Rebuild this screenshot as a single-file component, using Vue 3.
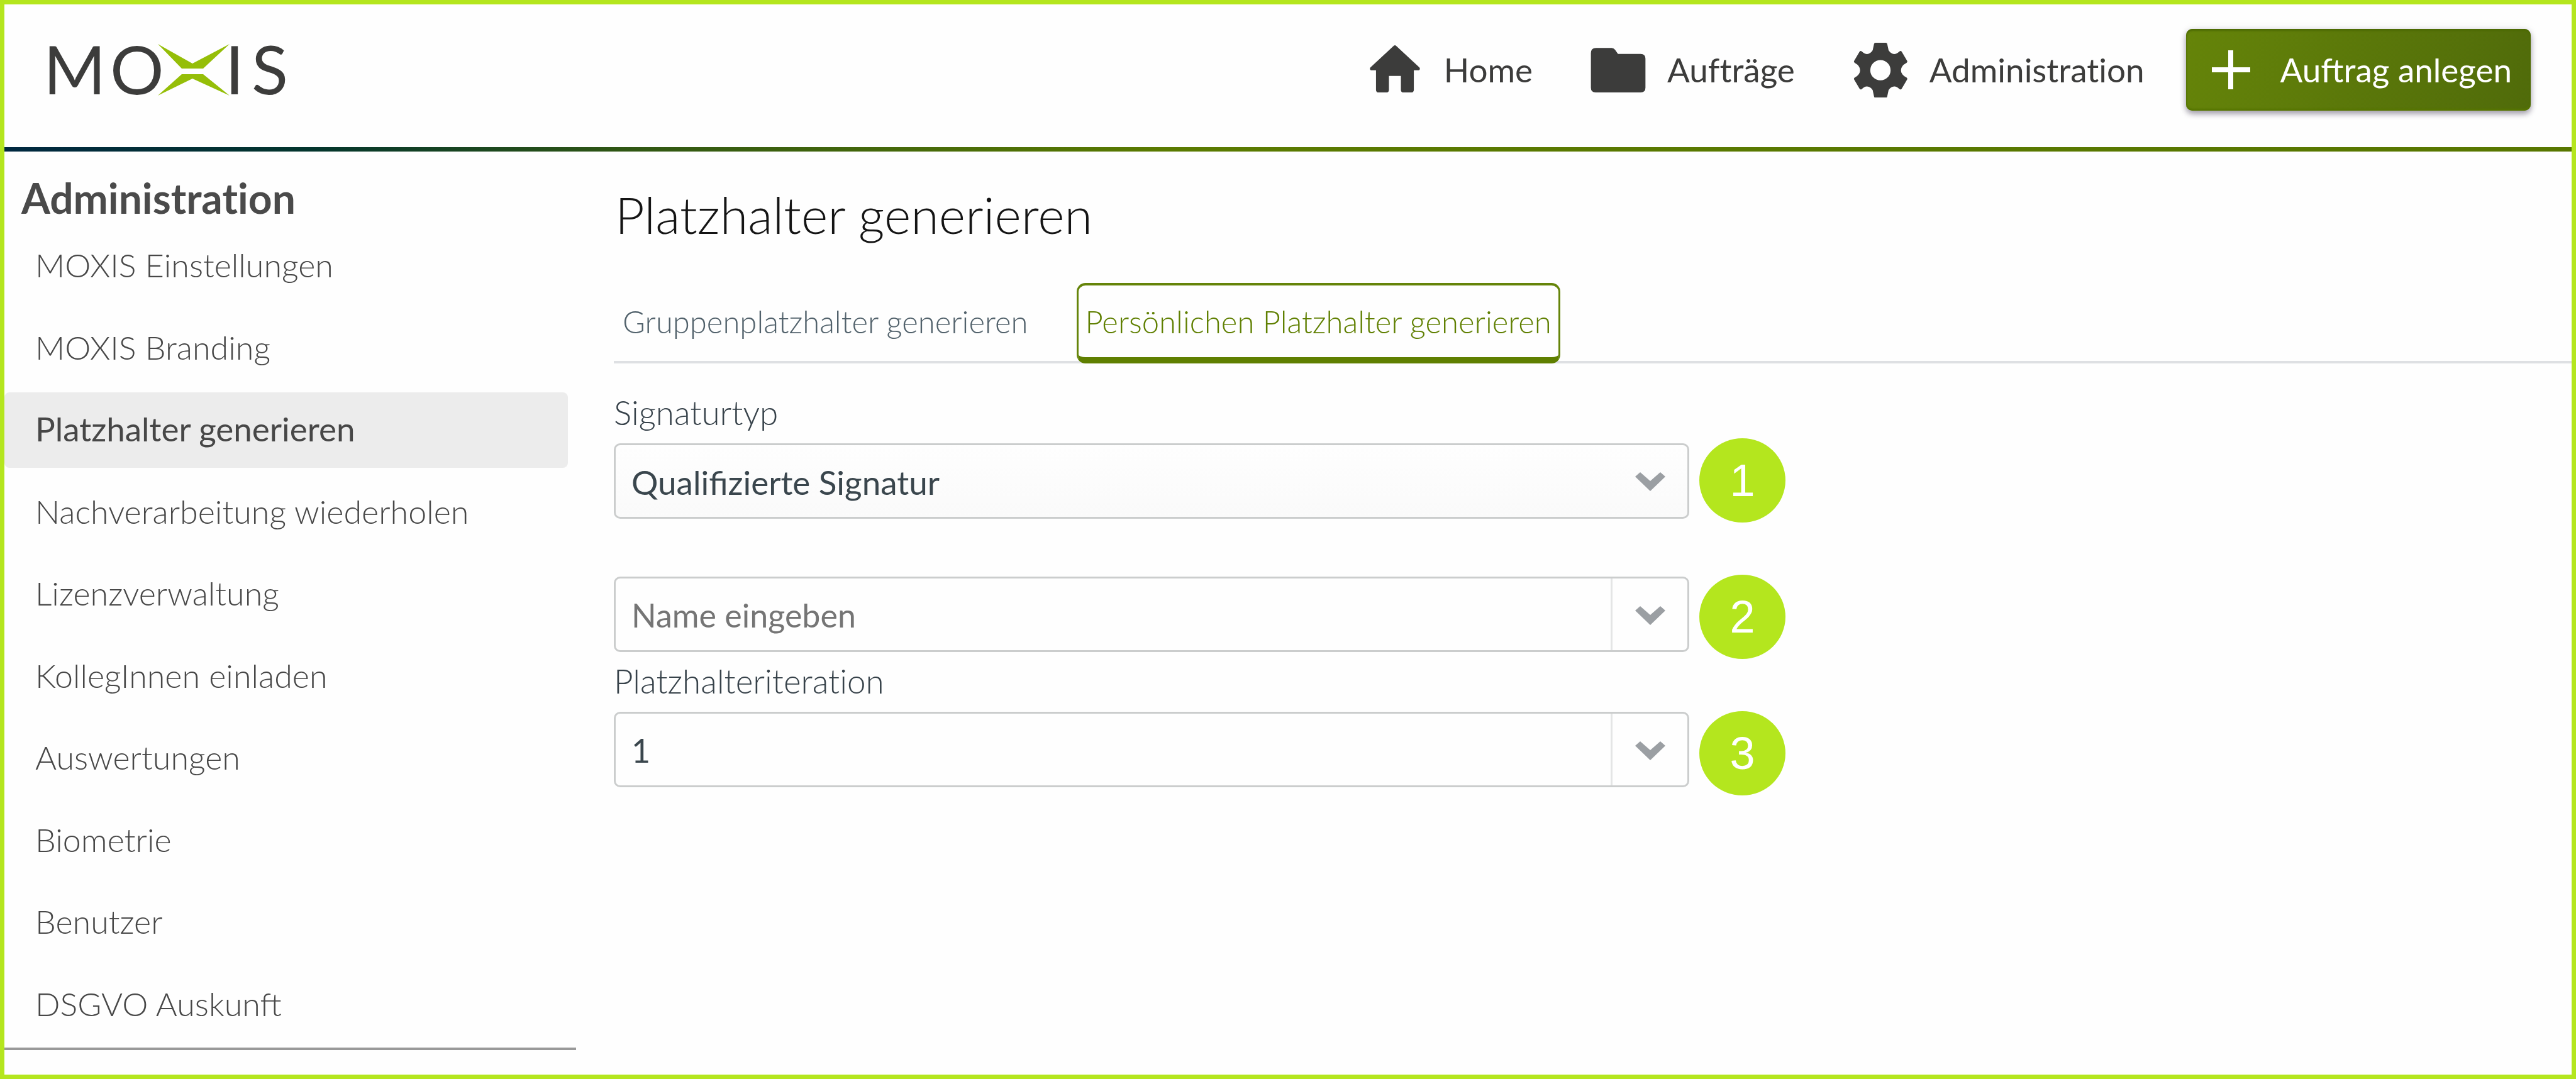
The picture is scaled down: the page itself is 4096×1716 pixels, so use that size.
<script setup>
import { ref } from 'vue'

const menu = [
  'MOXIS Einstellungen',
  'MOXIS Branding',
  'Platzhalter generieren',
  'Nachverarbeitung wiederholen',
  'Lizenzverwaltung',
  'KollegInnen einladen',
  'Auswertungen',
  'Biometrie',
  'Benutzer',
  'DSGVO Auskunft'
]
const activeMenu = 'Platzhalter generieren'

const tabs = ['Gruppenplatzhalter generieren', 'Persönlichen Platzhalter generieren']
const activeTab = ref(tabs[1])

const signatureType = ref('Qualifizierte Signatur')
const name = ref('')
const iteration = ref('1')
const steps = [1, 2, 3]
</script>

<template>
  <div class="page">
    <header class="topbar">
      <a class="logo" href="#" aria-label="MOXIS">
        <svg width="420" height="144" viewBox="0 -22 420 144">
          <g class="wordmark">
            <text x="9" y="90">M</text>
            <text x="115" y="90">O</text>
            <text x="298" y="90">I</text>
            <text x="340" y="90">S</text>
          </g>
          <path class="mark" d="M191 10 246 41 305 10 263 49H229Z M229 58H263L305 92 246 65 191 92Z" />
        </svg>
      </a>

      <nav class="nav" aria-label="Hauptnavigation">
        <a href="#">
          <svg class="icon" viewBox="34 59 278 278">
            <path d="M173 75Q178 76 182 80L296 186Q302 195 294 200H268V298Q268 312 254 312H217Q203 312 203 298V229H143V298Q143 312 129 312H92Q78 312 78 298V200H52Q44 195 50 186L164 80Q168 76 173 75Z" />
          </svg>
          <span>Home</span>
        </a>
        <a href="#">
          <svg class="icon" viewBox="1158 59 278 278">
            <path d="M1186 88H1264Q1274 88 1281 97L1296 118H1410Q1434 118 1434 142V288Q1434 312 1410 312H1184Q1160 312 1160 288V114Q1160 88 1186 88Z" />
          </svg>
          <span>Aufträge</span>
        </a>
        <a href="#">
          <svg class="icon" viewBox="78 59 278 278">
            <path fill-rule="evenodd" d="M192 62H244Q250 62 251 68L258 100Q270 118 286 119 298 119 312 106 319 100 324 107L351 153Q354 159 348 163 320 178 320 200 320 222 348 237 354 241 351 247L324 293Q319 300 312 294 298 281 286 282 270 283 258 300L251 332Q250 338 244 338H192Q186 338 185 332L178 300Q166 283 150 282 138 281 124 294 117 300 112 293L85 247Q82 241 88 237 115 222 115 200 115 178 88 163 82 159 85 153L112 107Q117 100 124 106 138 119 150 119 166 118 178 100L185 68Q186 62 192 62ZM217 149A51 51 0 1 0 217 251 51 51 0 1 0 217 149Z" />
          </svg>
          <span>Administration</span>
        </a>
      </nav>

      <button class="create" type="button">
        <svg width="61" height="62" viewBox="0 0 61 62">
          <path d="M30 3V59M3 31H58" fill="none" stroke="#fff" stroke-width="8" stroke-linecap="square" />
        </svg>
        Auftrag anlegen
      </button>
    </header>

    <div class="body">
      <aside class="sidebar">
        <h2>Administration</h2>
        <ul>
          <li v-for="item in menu" :key="item">
            <a href="#" :class="{ active: item === activeMenu }">{{ item }}</a>
          </li>
        </ul>
      </aside>

      <main class="content">
        <h1>Platzhalter generieren</h1>

        <div class="tabs" role="tablist">
          <button
            v-for="tab in tabs"
            :key="tab"
            type="button"
            role="tab"
            :aria-selected="tab === activeTab"
            :class="{ active: tab === activeTab }"
            @click="activeTab = tab"
          >{{ tab }}</button>
        </div>

        <div class="form">
          <form class="fields" @submit.prevent>
            <label for="signature-type">Signaturtyp</label>
            <div class="control dropdown">
              <select id="signature-type" v-model="signatureType">
                <option>Qualifizierte Signatur</option>
              </select>
              <svg class="chevron" viewBox="0 0 48 30"><path d="M8 0 24 14 40 0 48 7 24 30 0 7Z" /></svg>
            </div>

            <div class="control combo spaced">
              <input v-model="name" type="text" placeholder="Name eingeben" aria-label="Name" />
              <button type="button" aria-label="Namen anzeigen">
                <svg class="chevron" viewBox="0 0 48 30"><path d="M8 0 24 14 40 0 48 7 24 30 0 7Z" /></svg>
              </button>
            </div>

            <label class="next" for="iteration">Platzhalteriteration</label>
            <div class="control combo">
              <input id="iteration" v-model="iteration" type="text" />
              <button type="button" aria-label="Iterationen anzeigen">
                <svg class="chevron" viewBox="0 0 48 30"><path d="M8 0 24 14 40 0 48 7 24 30 0 7Z" /></svg>
              </button>
            </div>
          </form>

          <div class="steps">
            <span v-for="step in steps" :key="step">{{ step }}</span>
          </div>
        </div>
      </main>
    </div>
  </div>
</template>

<style>
body {
  margin: 0;
  background: #fefefe;
}
</style>

<style scoped>
.page {
  box-sizing: border-box;
  min-height: 100vh;
  border: 7px solid #b4e61e;
  background: #fefefe;
  font-family: Lato, sans-serif;
  font-size: 53px;
  line-height: 64px;
  color: #3c3c3b;
}

.page * {
  box-sizing: border-box;
}

button,
input,
select {
  margin: 0;
  font: inherit;
  color: inherit;
}

a {
  color: inherit;
  text-decoration: none;
}

/* Top bar */
.topbar {
  display: flex;
  align-items: flex-start;
  height: 234px;
  padding: 39px 65px 0 53px;
  border-bottom: 7px solid;
  border-image: linear-gradient(90deg, #002840 0, #03352d 12%, #2f5614 24%, #5a7a00 45%, #587700 100%) 1;
}

.logo {
  display: block;
  margin-top: -8px;
}

.logo svg {
  display: block;
}

.wordmark {
  font-size: 107px;
  fill: #3c3c3b;
}

.mark {
  fill: #95be08;
}

.nav {
  display: flex;
  gap: 92px;
  height: 130px;
  margin-left: auto;
  margin-right: 66px;
  font-variant-ligatures: none;
}

.nav a {
  display: flex;
  align-items: center;
  gap: 34px;
}

.icon {
  width: 88px;
  height: 88px;
  fill: #3c3c3b;
}

.create {
  display: flex;
  align-items: center;
  gap: 48px;
  height: 130px;
  padding: 0 30px 0 41px;
  border: 0;
  border-radius: 10px;
  background: linear-gradient(105deg, #658409 0%, #506b0a 100%);
  box-shadow: 0 5px 10px rgba(30, 20, 50, 0.4), 0 0 14px rgba(30, 20, 50, 0.08), inset 0 3px 3px #4d6a04, inset 0 -3px 3px #567500;
  color: #fff;
  white-space: nowrap;
}

/* Sidebar */
.body {
  display: flex;
}

.sidebar {
  flex: 0 0 909px;
  border-bottom: 4px solid #999;
}

.sidebar h2 {
  margin: 35px 0 9px 27px;
  font-size: 66px;
  line-height: 78px;
  font-weight: 700;
  font-variant-ligatures: none;
  color: #4a4a4a;
}

.sidebar ul {
  display: flex;
  flex-direction: column;
  justify-content: space-between;
  height: 1295px;
  margin: 0 13px 8px 0;
  padding: 0;
  list-style: none;
}

.sidebar li a {
  display: block;
  height: 120px;
  padding-left: 49px;
  border-radius: 8px;
  font-size: 52px;
  line-height: 116px;
  font-weight: 300;
  color: #474747;
}

.sidebar li a.active {
  background: #ececec;
  font-size: 53px;
  font-weight: 400;
}

/* Content */
.content {
  flex: 1;
  min-width: 0;
  padding-left: 60px;
}

h1 {
  margin: 51px 0 60px;
  padding-left: 2px;
  font-size: 81px;
  line-height: 98px;
  font-weight: 300;
  color: #141414;
}

.tabs {
  display: flex;
  gap: 63px;
  height: 128px;
  border-bottom: 4px solid #dee0e3;
}

.tabs button {
  height: 128px;
  padding: 0 11px;
  border: 3px solid transparent;
  border-top-width: 4px;
  border-bottom-width: 10px;
  border-radius: 14px;
  background: none;
  font-size: 49px;
  font-weight: 300;
  white-space: nowrap;
  color: #51616b;
}

.tabs button.active {
  border-color: #658409;
  border-bottom-color: #5f7f00;
  background: #fefefe;
  color: #5f7f00;
}

.form {
  display: flex;
  gap: 16px;
}

.fields {
  flex: 0 1 1710px;
  padding-top: 46px;
}

label {
  display: block;
  margin-bottom: 17px;
  font-weight: 300;
  font-variant-ligatures: none;
  color: #37424a;
}

label.next {
  margin-top: 14px;
}

.control {
  display: flex;
  align-items: center;
  height: 120px;
  border: 3px solid #cbcdcd;
  border-radius: 10px;
  color: #3a464d;
}

.spaced {
  margin-top: 92px;
}

.dropdown {
  padding: 2px 35px 0 0;
  background: linear-gradient(#fefefe, #fafafa);
}

.control select,
.control input {
  flex: 1;
  min-width: 0;
  height: 100%;
  padding: 2px 25px 0;
  border: 0;
  outline: 0;
  appearance: none;
  background: none;
}

.control input {
  font-size: 52px;
}

.control input::placeholder {
  color: #757575;
  opacity: 1;
}

.combo button {
  display: flex;
  align-items: center;
  justify-content: center;
  width: 122px;
  height: 100%;
  padding: 3px 0 0;
  border: 0;
  border-left: 3px solid #e4e5e5;
  background: none;
}

.chevron {
  width: 48px;
  height: 30px;
  fill: #9b9fa3;
}

.steps {
  display: flex;
  flex-direction: column;
  gap: 83px;
  padding-top: 119px;
}

.steps span {
  width: 137px;
  height: 134px;
  border-radius: 50%;
  background: #b4e61e;
  font-family: "Liberation Sans", Arial, sans-serif;
  font-size: 72px;
  line-height: 134px;
  text-align: center;
  color: #fff;
}
</style>
